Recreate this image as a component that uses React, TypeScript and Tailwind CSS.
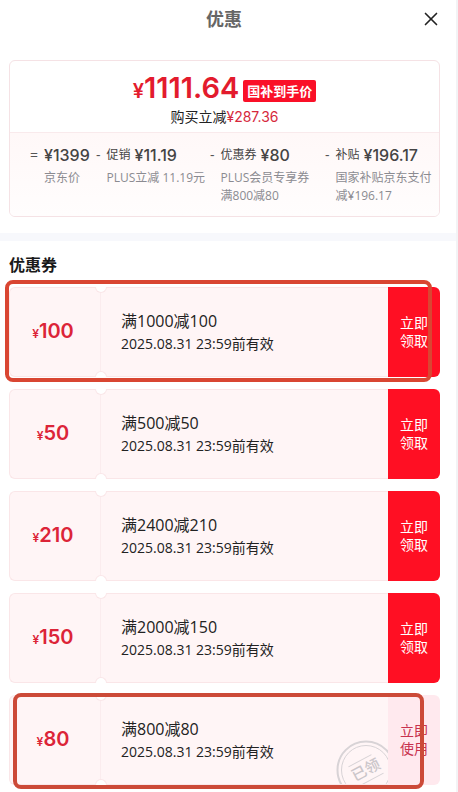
import { X } from 'lucide-react';

interface PricePart {
  sign: string;
  label?: string;
  price: string;
  notes: string[];
}

interface Coupon {
  amount: number;
  title: string;
  received?: boolean;
  mark?: 'wide' | 'inset';
}

const parts: PricePart[] = [
  { sign: '=', price: '1399', notes: ['京东价'] },
  { sign: '-', label: '促销', price: '11.19', notes: ['PLUS立减 11.19元'] },
  { sign: '-', label: '优惠券', price: '80', notes: ['PLUS会员专享券', '满800减80'] },
  { sign: '-', label: '补贴', price: '196.17', notes: ['国家补贴京东支付', '减¥196.17'] },
];

const coupons: Coupon[] = [
  { amount: 100, title: '满1000减100', mark: 'wide' },
  { amount: 50, title: '满500减50' },
  { amount: 210, title: '满2400减210' },
  { amount: 150, title: '满2000减150' },
  { amount: 80, title: '满800减80', received: true, mark: 'inset' },
];

const PriceSummary = () => {
  return (
    <section className="rounded-md border border-[#f5e2e5] overflow-hidden">
      <div className="flex flex-col items-center pt-3 pb-[3px]">
        <div className="flex h-8 items-center gap-1">
          <p className="flex items-baseline text-[#e31b2d] font-semibold leading-8 font-['Inter',sans-serif]">
            <span className="text-xl leading-8">¥</span>
            <span className="text-[29px] leading-8">1111.64</span>
          </p>
          <span className="mt-1 rounded-xs bg-[#fa1028] px-1 text-[13px] leading-[22px] font-bold text-white">国补到手价</span>
        </div>
        <p className="text-sm leading-6 text-[#222]">
          购买立减<span className="text-[#d6283c] font-['Inter',sans-serif]">¥287.36</span>
        </p>
      </div>
      <div className="grid grid-cols-[66fr_114fr_115fr_108fr] min-h-[84px] border-t border-[#f9eaec] bg-linear-to-b from-[#fff8f8] to-[#fffdfd] pl-5 pr-1.5 pt-3">
        {parts.map((part) => (
          <div key={part.price} className="flex min-w-0 gap-1.5 whitespace-nowrap">
            <span className="text-sm leading-5 text-[#555]">{part.sign}</span>
            <div>
              <p className="mb-1 flex items-center gap-1 leading-5 text-[#444]">
                {part.label && <span className="text-xs leading-5">{part.label}</span>}
                <span className="text-base leading-5 font-medium font-['Inter',sans-serif]">¥{part.price}</span>
              </p>
              {part.notes.map((note) => (
                <p key={note} className="text-xs leading-[18px] text-[#8b8b91]">{note}</p>
              ))}
            </div>
          </div>
        ))}
      </div>
    </section>
  );
};

const ReceivedStamp = () => {
  return (
    <div className="absolute inset-0 overflow-hidden">
      <svg viewBox="0 0 60 60" className="absolute -right-2 -bottom-4 size-[60px]" fill="none" stroke="#d8d3d6">
        <circle cx="30" cy="30" r="28.5" strokeWidth="2" />
        <circle cx="30" cy="30" r="24.5" strokeWidth="1" />
        <g transform="rotate(-28 30 30)">
          <path d="M16 19h26M18 41h26" strokeWidth="1" />
          <text x="30" y="35" textAnchor="middle" fontSize="15" fontWeight="500" fill="#cbc6ca" stroke="none">已领</text>
        </g>
      </svg>
    </div>
  );
};

const CouponRow = ({ coupon }: { coupon: Coupon }) => {
  return (
    <li className="relative flex h-[90px]">
      <div className="relative flex flex-1 rounded-l-md border border-r-0 border-[#fae6e8] bg-[#fff5f6]">
        <p className="flex w-[91px] items-baseline justify-center border-r border-[#fbecee] pr-1 font-semibold text-[#dc2438] font-['Inter',sans-serif]">
          <span className="text-xs leading-[86px]">¥</span>
          <span className="text-xl leading-[86px]">{coupon.amount}</span>
        </p>
        <span className="absolute -top-px left-[85px] h-[6px] w-3 rounded-b-full border border-t-0 border-[#fae6e8] bg-white" />
        <span className="absolute -bottom-px left-[85px] h-[6px] w-3 rounded-t-full border border-b-0 border-[#fae6e8] bg-white" />
        <div className="flex flex-col justify-center pl-5 text-[#222]">
          <h3 className="text-base leading-6">{coupon.title}</h3>
          <p className="text-sm leading-[22px]">2025.08.31 23:59前有效</p>
        </div>
        {coupon.received && <ReceivedStamp />}
      </div>
      {coupon.received ? (
        <button className="w-[52px] rounded-r-md bg-[#ffe9ee] px-3 text-sm leading-[18px] text-[#c8324e]">立即使用</button>
      ) : (
        <button className="w-[52px] rounded-r-md bg-[#ff0f23] px-3 text-sm leading-[18px] text-white">立即领取</button>
      )}
      {coupon.mark === 'wide' && (
        <div className="pointer-events-none absolute -top-[7px] -bottom-[5px] -left-1 right-2 rounded-lg border-4 border-[#d94632]" />
      )}
      {coupon.mark === 'inset' && (
        <div className="pointer-events-none absolute -top-[2px] -bottom-1 left-1 right-4 rounded-lg border-4 border-[#cc4a38]" />
      )}
    </li>
  );
};

const App = () => {
  return (
    <main className="border-r-2 border-[#f3f3f5] bg-white pb-[7px] font-['Open_Sans','Noto_Sans_CJK_SC',sans-serif]">
      <header className="relative flex h-[60px] justify-center pt-1 pr-2">
        <h1 className="text-lg leading-[30px] font-bold text-[#666]">优惠</h1>
        <button aria-label="关闭" className="absolute top-2 right-[14px]">
          <X size={22} strokeWidth={1.8} color="#222" />
        </button>
      </header>

      <div className="pl-[9px] pr-4">
        <PriceSummary />
      </div>

      <div className="mt-4 h-2 bg-[#f7f8fc]" />

      <section className="pl-[9px] pr-4 pt-3">
        <h2 className="text-base leading-6 font-bold text-[#1a1a1a]">优惠券</h2>
        <ul className="mt-[10px] flex flex-col gap-3">
          {coupons.map((coupon) => (
            <CouponRow key={coupon.amount} coupon={coupon} />
          ))}
        </ul>
      </section>
    </main>
  );
};

export default App;
